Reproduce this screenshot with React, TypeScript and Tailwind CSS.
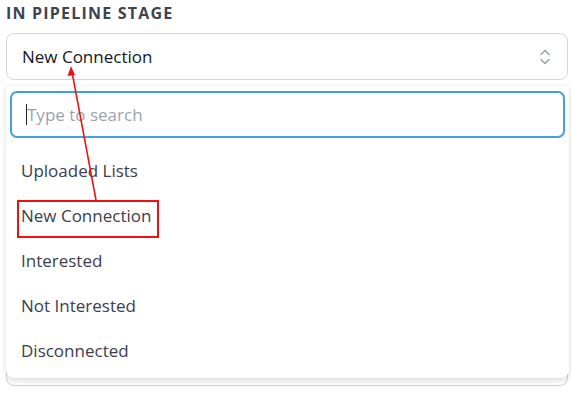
import React, { useState } from 'react';

const stages = ['Uploaded Lists', 'New Connection', 'Interested', 'Not Interested', 'Disconnected'];

const ChevronUpDown: React.FC = () => (
    <svg width="12" height="18" viewBox="0 0 12 18" fill="none" stroke="#9ca3af" strokeWidth="1.6" strokeLinecap="round" strokeLinejoin="round">
        <path d="M2 6.5 L6 2.5 L10 6.5" />
        <path d="M2 11.5 L6 15.5 L10 11.5" />
    </svg>
);

const App: React.FC = () => {
    const [query, setQuery] = useState('');
    const selected = 'New Connection';

    return (
        <div className="relative w-[572px] h-[398px] bg-white px-[6px] pr-[4px] pt-[2px] font-['Open_Sans','Noto_Sans',sans-serif] overflow-hidden">
            <div className="text-[16px] leading-[22px] font-bold tracking-[1.2px] text-[#3d4451] uppercase">In Pipeline Stage</div>

            <button className="mt-[9px] flex h-[47px] w-full items-center justify-between rounded-[8px] border border-[#d4d6dc] bg-white pl-[15px] pr-[16px] text-left">
                <span className="text-[17px] text-[#111827]">{selected}</span>
                <ChevronUpDown />
            </button>

            {/* next field, mostly covered by the open menu */}
            <div className="mt-[6px] h-[300px] w-full rounded-[8px] border border-[#cfd1d7]" />

            <div className="absolute left-[6px] right-[3px] top-[86px] rounded-b-[8px] bg-white px-[4px] pt-[5px] pb-[5px] shadow-[0_3px_6px_rgba(0,0,0,0.12),0_0_2px_rgba(0,0,0,0.08)]">
                <div className="relative">
                    <input
                        value={query}
                        onChange={(e) => setQuery(e.target.value)}
                        placeholder="Type to search"
                        className="h-[47px] w-full rounded-[7px] border-2 border-[#3fa3e0] px-[15px] text-[17px] text-[#111827] outline-none placeholder:text-[#9ca3af]"
                    />
                    {query === '' && <span className="absolute left-[16px] top-[13px] h-[21px] w-px bg-[#222]" />}
                </div>
                <div className="mt-[10px]">
                    {stages
                        .filter((s) => s.toLowerCase().includes(query.toLowerCase()))
                        .map((s) => (
                            <div key={s} className="flex h-[45px] items-center px-[11px] text-[17px] text-[#3b404c]">
                                {s}
                            </div>
                        ))}
                </div>
            </div>

            {/* annotation */}
            <svg className="pointer-events-none absolute inset-0" width="572" height="398">
                <rect x="18" y="201" width="140" height="36" fill="none" stroke="#ee1111" strokeWidth="2" />
                <line x1="96" y1="200" x2="72" y2="72" stroke="#ee1111" strokeWidth="1.5" />
                <path d="M71 66 L67.5 76 L75 75 Z" fill="#ee1111" />
            </svg>
        </div>
    );
};

export default App;
